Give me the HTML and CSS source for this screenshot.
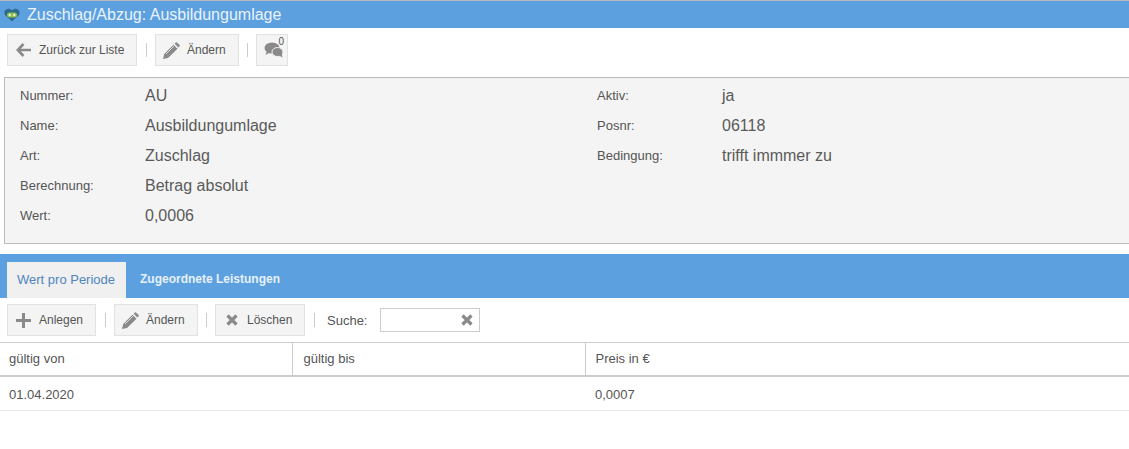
FILE: index.html
```
<!DOCTYPE html>
<html lang="de">
<head>
<meta charset="utf-8">
<title>Zuschlag/Abzug: Ausbildungumlage</title>
<link rel="stylesheet" href="styles.css">
</head>
<body>
<header class="title-bar">
  <svg class="logo" viewBox="0 0 16 14" width="16" height="14"><path d="M8 13.500 1.200 7.200C-.4 5.200.3 1.400 3.400.9 5.200.6 7 1.300 8 2.400 9 1.300 10.800.6 12.600.9c3.100.5 3.800 4.300 2.200 6.300z" fill="#2f6b8f"/><rect x="3" y="4.500" width="10" height="5" rx="2.500" fill="#8fc04a"/><path d="M4.500 7h2.500M5.750 5.750v2.500M9 7h2.500M10.250 5.750v2.500" stroke="#fff" stroke-width=".9"/></svg>
  <h1 class="title">Zuschlag/Abzug: Ausbildungumlage</h1>
</header>
<nav class="toolbar toolbar-top">
  <button class="btn btn-back"><svg class="ico" viewBox="0 0 15 14" width="15" height="14"><path d="M7.500 1 1.800 7l5.700 6M2.500 7H15" fill="none" stroke="#8a8a8a" stroke-width="2.600"/></svg>Zurück zur Liste</button>
  <span class="sep"></span>
  <button class="btn btn-edit"><svg class="ico" viewBox="0 0 17 17" width="17" height="17"><path d="M0 17l1.200-5L10.500 2.700l4 4L5 16zM2.300 12.500l2.400 2.400M11.600 1.700l1.200-1.200q.6-.5 1.200 0l2.600 2.600q.5.600 0 1.200l-1.200 1.200z" fill="#8a8a8a"/><path d="M3 12l7.800-7.800" stroke="#f4f4f4" stroke-width=".8"/></svg>Ändern</button>
  <span class="sep sep-tight"></span>
  <button class="btn btn-comment"><svg viewBox="0 0 20 16" width="20" height="16"><ellipse cx="8" cy="6" rx="7.500" ry="5.500" fill="#8a8a8a"/><path d="M3 9 1.500 13 7 10z" fill="#8a8a8a"/><ellipse cx="13.500" cy="10" rx="5.500" ry="4.500" fill="#8a8a8a" stroke="#f4f4f4"/><path d="M15 13.500l3.500 2-.8-4z" fill="#8a8a8a"/></svg><span class="count">0</span></button>
</nav>
<section class="details">
  <dl class="col col-left">
    <div class="row"><dt>Nummer:</dt><dd>AU</dd></div>
    <div class="row"><dt>Name:</dt><dd>Ausbildungumlage</dd></div>
    <div class="row"><dt>Art:</dt><dd>Zuschlag</dd></div>
    <div class="row"><dt>Berechnung:</dt><dd>Betrag absolut</dd></div>
    <div class="row"><dt>Wert:</dt><dd>0,0006</dd></div>
  </dl>
  <dl class="col">
    <div class="row"><dt>Aktiv:</dt><dd>ja</dd></div>
    <div class="row"><dt>Posnr:</dt><dd>06118</dd></div>
    <div class="row"><dt>Bedingung:</dt><dd>trifft immmer zu</dd></div>
  </dl>
</section>
<div class="tabs">
  <a class="tab active">Wert pro Periode</a>
  <a class="tab">Zugeordnete Leistungen</a>
</div>
<nav class="toolbar toolbar-sub">
  <button class="btn btn-add"><svg class="ico" viewBox="0 0 15 15" width="15" height="15"><path d="M7.500 0v15M0 7.500h15" stroke="#8a8a8a" stroke-width="3"/></svg>Anlegen</button>
  <span class="sep"></span>
  <button class="btn btn-edit2"><svg class="ico" viewBox="0 0 17 17" width="17" height="17"><path d="M0 17l1.200-5L10.500 2.700l4 4L5 16zM2.300 12.500l2.400 2.400M11.600 1.700l1.200-1.200q.6-.5 1.200 0l2.600 2.600q.5.600 0 1.200l-1.200 1.200z" fill="#8a8a8a"/><path d="M3 12l7.800-7.800" stroke="#f4f4f4" stroke-width=".8"/></svg>Ändern</button>
  <span class="sep sep-tight"></span>
  <button class="btn btn-del"><svg class="ico" viewBox="0 0 12 12" width="12" height="12"><path d="M1.500 1.500l9 9M10.500 1.500l-9 9" stroke="#8a8a8a" stroke-width="3.200"/></svg>Löschen</button>
  <span class="sep sep-last"></span>
  <label class="search-label" for="suche">Suche:</label>
  <span class="search"><input id="suche" type="text"><svg viewBox="0 0 12 12" width="12" height="12"><path d="M1.500 1.500l9 9M10.500 1.500l-9 9" stroke="#8a8a8a" stroke-width="3.200"/></svg></span>
</nav>
<table class="grid">
  <colgroup><col class="c1"><col class="c2"><col></colgroup>
  <thead><tr><th>gültig von</th><th>gültig bis</th><th>Preis in €</th></tr></thead>
  <tbody><tr><td>01.04.2020</td><td></td><td>0,0007</td></tr></tbody>
</table>
</body>
</html>
```
FILE: styles.css
```
* { box-sizing: border-box; }
html, body { margin: 0; padding: 0; background: #fff; overflow: hidden; }
body { width: 1129px; height: 449px; padding-top: 1px; font-family: "Liberation Sans", Arial, sans-serif; color: #555; font-size: 12px; }

.title-bar { height: 27px; background: #5ca0df; display: flex; align-items: center; padding-left: 4px; box-shadow: 0 -1px 0 #b9b9b9; }
.logo { flex: none; }
.title { margin: 0 0 0 7px; font-size: 16px; font-weight: 400; color: #eaf3fb; line-height: 27px; }

.toolbar { display: flex; align-items: center; padding-left: 7px; }
.toolbar-top { height: 32px; margin-top: 6px; }
.toolbar-sub { height: 32px; margin-top: 6px; }
.btn { height: 32px; padding: 0; display: flex; align-items: center; background: #f4f4f4; border: 1px solid #e2e2e2; font: 12px "Liberation Sans", Arial, sans-serif; color: #555; }
.ico { flex: none; }
.sep { width: 1px; height: 14px; background: #ccc; }

.btn-back { width: 130px; padding-left: 8px; }
.btn-back .ico { margin-right: 8px; }
.btn-edit { width: 84px; padding-left: 7px; }
.btn-edit .ico { margin-right: 7px; }
.toolbar-top .sep { margin: 0 8px 0 9px; }
.toolbar .sep-tight { margin: 0 8px; }
.btn-comment { width: 32px; padding-left: 7px; position: relative; }
.count { position: absolute; top: 1px; right: 3px; font-size: 10px; line-height: 11px; }

.details { height: 167px; width: 1140px; margin: 11px 0 0 4px; padding: 2px 0 0 15px; background: #f4f4f4; border: 1px solid #bbb; border-right: 0; display: flex; }
.col { margin: 0; }
.col-left { width: 577px; }
.row { height: 30px; display: flex; align-items: center; }
dt { width: 125px; font-size: 13px; }
dd { margin: 0; padding-top: 2px; font-size: 16px; color: #5a5a5a; }

.tabs { height: 44px; margin-top: 10px; padding: 8px 0 0 7px; background: #5ca0df; display: flex; }
.tab { height: 36px; line-height: 35px; font-size: 12px; font-weight: 700; color: #e6f0fa; padding: 0 14px; }
.tab.active { width: 119px; padding: 0 0 0 10px; background: #f0f0f0; color: #4f86bd; font-size: 13px; font-weight: 400; }

.btn-add { width: 89px; padding-left: 8px; }
.btn-add .ico { margin-right: 8px; }
.toolbar-sub .sep { margin: 0 8px 0 9px; }
.toolbar-sub .sep-tight { margin: 0 8px; }
.toolbar-sub .sep-last { margin-right: 12px; }
.btn-edit2 { width: 84px; padding-left: 7px; }
.btn-edit2 .ico { margin-right: 7px; }
.btn-del { width: 90px; padding-left: 10px; }
.btn-del .ico { margin-right: 9px; }
.search-label { margin-right: 13px; font-size: 13px; }
.search { width: 100px; height: 24px; border: 1px solid #ccc; background: #fff; display: flex; align-items: center; }
.search input { width: 79px; height: 22px; border: 0; padding: 0; background: transparent; outline: 0; }
.search svg { flex: none; margin-left: 1px; }

.grid { width: 1129px; margin-top: 6px; border-collapse: collapse; table-layout: fixed; font-size: 13px; }
.c1 { width: 292px; }
.c2 { width: 293px; }
.grid th { height: 33px; padding: 0 9px 0 10px; text-align: left; font-weight: 400; border-top: 1px solid #ccc; border-bottom: 2px solid #ccc; border-right: 1px solid #ccc; }
.grid th:first-child, .grid td:first-child { padding-left: 9px; }
.grid th:nth-child(2) { padding-left: 11px; }
.grid th:last-child { border-right: 0; }
.grid td { height: 35px; padding: 2px 9px 0 10px; border-bottom: 1px solid #e6e6e6; }
```
